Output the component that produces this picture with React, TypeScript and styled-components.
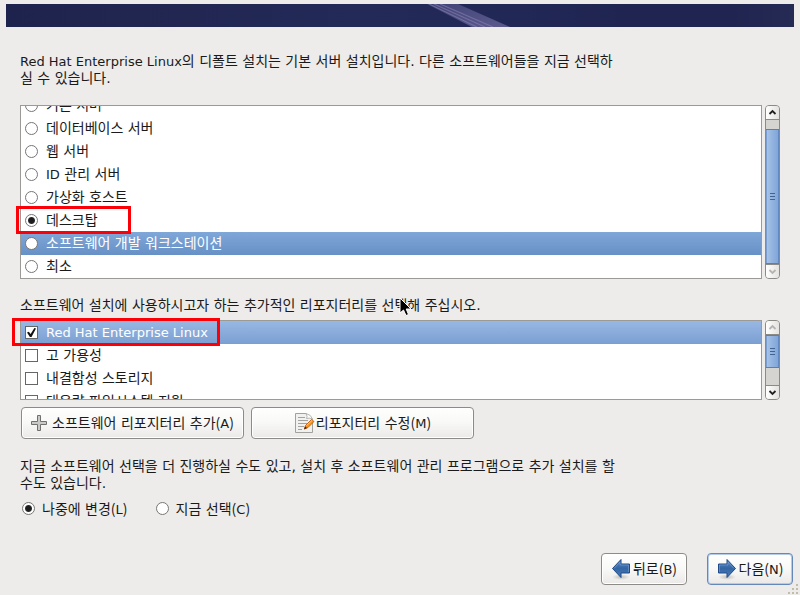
import React from "react";
import styled, { createGlobalStyle } from "styled-components";

const GlobalStyle = createGlobalStyle`
  * { box-sizing: border-box; }
  body {
    margin: 0;
    background: #edecea;
    color: #1a1a1a;
    font-family: "DejaVu Sans", "Noto Sans CJK KR", sans-serif;
    font-size: 14px;
    line-height: 17px;
  }
`;

const Page = styled.div`
  position: relative;
  display: flex;
  flex-direction: column;
  min-height: 100vh;
`;

const Banner = styled.header`
  height: 23px;
  margin: 4px 6px 0;
  overflow: hidden;
  background: linear-gradient(90deg, #1d234c 0%, #20264f 15%, #242a58 45%, #222856 65%, #1f2450 80%, #1f2450 92%, #262b55 100%);
  svg { display: block; width: 100%; height: 23px; }
`;

const Main = styled.main`
  display: flex;
  flex-direction: column;
  padding: 26px 20px 0;
`;

const Latin = styled.span`
  font-family: "DejaVu Sans", sans-serif;
  font-size: 13px;
`;

const Paragraph = styled.p`
  margin: 0;
`;

const Prompt = styled(Paragraph)`
  position: relative;
  margin: 18px 0 6px;
`;

const Pointer = styled.svg`
  position: absolute;
  left: 379px;
  top: 0;
  width: 14px;
  height: 20px;
`;

const ListArea = styled.div<{ $height: number; $top?: number }>`
  position: relative;
  display: flex;
  gap: 3px;
  height: ${(p) => p.$height}px;
  margin-top: ${(p) => p.$top ?? 0}px;
`;

const List = styled.ul<{ $atEnd?: boolean }>`
  flex: 1;
  display: flex;
  flex-direction: column;
  justify-content: ${(p) => (p.$atEnd ? "flex-end" : "flex-start")};
  margin: 0;
  padding: 0;
  overflow: hidden;
  list-style: none;
  background: #fff;
  border: 1px solid #9c9a96;
`;

const Row = styled.li<{ $tone?: "strong" | "soft" }>`
  flex: none;
  height: 23px;
  color: ${(p) => (p.$tone ? "#fff" : "#1a1a1a")};
  background: ${(p) =>
    p.$tone === "strong"
      ? "linear-gradient(#7fa7d8, #6790c6)"
      : p.$tone === "soft"
        ? "linear-gradient(#98b8e3, #7b9fd2)"
        : "none"};
`;

const Option = styled.label`
  display: flex;
  align-items: center;
  gap: 7px;
  height: 23px;
  white-space: nowrap;
`;

const RowOption = styled(Option)`
  gap: 8px;
  padding-left: 4px;
`;

const Radio = styled.input.attrs({ type: "radio" })`
  appearance: none;
  flex: none;
  width: 13px;
  height: 13px;
  margin: 0;
  border: 1px solid #767676;
  border-radius: 50%;
  background: #fff;
  &:checked {
    background: radial-gradient(circle, #1c1c1c 0 2px, #2c2c2c 3px, #fff 4px);
  }
`;

const Check = styled.input.attrs({ type: "checkbox" })`
  appearance: none;
  flex: none;
  display: grid;
  place-items: center;
  width: 13px;
  height: 13px;
  margin: 0;
  border: 1px solid #666;
  background: #fff;
  &:checked::before {
    content: "";
    width: 9px;
    height: 9px;
    background: #111;
    clip-path: polygon(0 50%, 20% 42%, 40% 68%, 82% 0, 100% 6%, 50% 100%, 32% 100%);
  }
`;

const Bar = styled.div`
  display: flex;
  flex-direction: column;
  width: 15px;
  overflow: hidden;
  border: 1px solid #8b8a86;
  border-radius: 4px;
  background: #d5d4d1;
`;

const Step = styled.button<{ $end?: boolean }>`
  flex: none;
  display: grid;
  place-items: center;
  height: 14px;
  margin: 0;
  padding: 0;
  border: 0 solid #8b8a86;
  border-bottom-width: ${(p) => (p.$end ? 0 : 1)}px;
  border-top-width: ${(p) => (p.$end ? 1 : 0)}px;
  background: linear-gradient(90deg, #fff, #e3e2df);
  svg { display: block; }
`;

const Track = styled.div<{ $end?: boolean }>`
  flex: 1;
  display: flex;
  flex-direction: column;
  justify-content: ${(p) => (p.$end ? "flex-end" : "flex-start")};
`;

const Thumb = styled.div<{ $size: number }>`
  display: flex;
  flex-direction: column;
  align-items: center;
  justify-content: center;
  gap: 2px;
  height: ${(p) => p.$size}px;
  border: 1px solid #5b7fb2;
  border-width: 1px 0;
  box-shadow: inset 1px 0 #7b9ed0, inset -1px 0 #6289c0;
  background: linear-gradient(90deg, #a9c6ea, #92b3df 50%, #7da3d7);
`;

const Grip = styled.i`
  width: 5px;
  height: 1px;
  background: #41638f;
`;

const Highlight = styled.div<{ $left: number; $top: number; $width: number; $height: number }>`
  position: absolute;
  left: ${(p) => p.$left}px;
  top: ${(p) => p.$top}px;
  width: ${(p) => p.$width}px;
  height: ${(p) => p.$height}px;
  border: 3px solid #fb0007;
  pointer-events: none;
`;

const Buttons = styled.div`
  display: flex;
  gap: 7px;
  margin: 7px 1px 19px;
`;

const Button = styled.button<{ $wide?: boolean; $focus?: boolean }>`
  display: flex;
  align-items: center;
  justify-content: center;
  gap: ${(p) => (p.$wide ? 5 : 2)}px;
  width: ${(p) => (p.$wide ? 223 : 86)}px;
  height: 32px;
  padding: 0;
  border: 1px solid ${(p) => (p.$focus ? "#6588b8" : "#8c8b88")};
  border-radius: 4px;
  box-shadow: ${(p) => (p.$focus ? "inset 0 0 0 1px #b5cbe8" : "inset 0 0 0 1px #fff")};
  background: linear-gradient(#ffffff, #f8f8f7 50%, #eae9e7);
  color: #1a1a1a;
  font: inherit;
  white-space: nowrap;
  svg { flex: none; }
`;

const EditButton = styled(Button)`
  gap: 1px;
`;

const Paren = styled.span`
  font-family: "Noto Sans CJK KR", sans-serif;
`;

const Choices = styled.div`
  display: flex;
  gap: 28px;
  margin: 5px 2px 0;
`;

const Footer = styled.footer`
  display: flex;
  justify-content: flex-end;
  gap: 20px;
  margin-top: auto;
  padding: 0 7px 10px;
`;

const ResizeGrip = styled.svg`
  position: absolute;
  right: 1px;
  bottom: 0;
`;

function Key({ letter }: { letter: string }) {
  return (
    <>
      <Paren>(</Paren>
      <Latin>{letter}</Latin>
      <Paren>)</Paren>
    </>
  );
}

function Chevron({ up, dim }: { up?: boolean; dim?: boolean }) {
  return (
    <svg width="9" height="7" viewBox="0 0 9 7">
      <path d={up ? "M1.5 5L4.5 2L7.5 5" : "M1.5 2L4.5 5L7.5 2"} fill="none" stroke={dim ? "#b5b4b1" : "#222"} strokeWidth="1.8" />
    </svg>
  );
}

function ScrollBar({ size, end }: { size: number; end?: boolean }) {
  return (
    <Bar>
      <Step type="button" aria-label="위로"><Chevron up dim={!end} /></Step>
      <Track $end={end}>
        <Thumb $size={size}><Grip /><Grip /><Grip /></Thumb>
      </Track>
      <Step type="button" aria-label="아래로" $end><Chevron dim={end} /></Step>
    </Bar>
  );
}

function Arrow({ right }: { right?: boolean }) {
  const id = right ? "arrow-next" : "arrow-back";
  return (
    <svg width="20" height="22" viewBox="0 0 20 22">
      <defs>
        <linearGradient id={id} x1="0" y1="0" x2="0" y2="1">
          <stop offset="0" stopColor="#5b8bc4" />
          <stop offset="0.5" stopColor="#3465a4" />
          <stop offset="1" stopColor="#4a7dba" />
        </linearGradient>
        <radialGradient id={id + "-shade"}>
          <stop offset="0" stopColor="#999" stopOpacity="0.55" />
          <stop offset="1" stopColor="#999" stopOpacity="0" />
        </radialGradient>
      </defs>
      <ellipse cx="10" cy="19" rx="9" ry="3" fill={`url(#${id}-shade)`} />
      <g transform={right ? "translate(20 0) scale(-1 1)" : undefined}>
        <path d="M1.5 10.500L10 1.500V6H18.500V15H10V19.500Z" fill={`url(#${id})`} stroke="#204a87" strokeLinejoin="round" />
        <path d="M3 10.500L9 4V7H17.500V14" fill="none" stroke="#83a9d8" strokeOpacity="0.5" />
      </g>
    </svg>
  );
}

const servers: { name: React.ReactNode; id: string }[] = [
  { id: "basic", name: "기본 서버" },
  { id: "database", name: "데이터베이스 서버" },
  { id: "web", name: "웹 서버" },
  { id: "identity", name: <span><Latin>ID</Latin> 관리 서버</span> },
  { id: "virtual", name: "가상화 호스트" },
  { id: "desktop", name: "데스크탑" },
  { id: "workstation", name: "소프트웨어 개발 워크스테이션" },
  { id: "minimal", name: "최소" },
];

const repositories: { name: React.ReactNode; id: string }[] = [
  { id: "rhel", name: <Latin>Red Hat Enterprise Linux</Latin> },
  { id: "ha", name: "고 가용성" },
  { id: "resilient", name: "내결함성 스토리지" },
  { id: "filesystem", name: "대용량 파일시스템 지원" },
];

export default function App() {
  return (
    <Page>
      <GlobalStyle />
      <Banner>
        <svg viewBox="0 0 788 23" preserveAspectRatio="none">
          <defs>
            <linearGradient id="beam" x1="0" y1="0" x2="1" y2="1">
              <stop offset="0" stopColor="#4a4c83" />
              <stop offset="1" stopColor="#706ba0" />
            </linearGradient>
          </defs>
          <path d="M421 0H452L504 23H466Z" fill="url(#beam)" opacity="0.75" />
          <path d="M423 0L471 23M428 0L479 23M434 0L487 23" stroke="#8780b0" strokeWidth="1.2" opacity="0.6" />
        </svg>
      </Banner>
      <Main>
        <Paragraph>
          <Latin>Red Hat Enterprise Linux</Latin>의 디폴트 설치는 기본 서버 설치입니다. 다른 소프트웨어들을 지금 선택하
          <br />실 수 있습니다.
        </Paragraph>

        <ListArea $height={174} $top={18}>
          <List $atEnd>
            {servers.map((s) => (
              <Row key={s.id} $tone={s.id === "workstation" ? "strong" : undefined}>
                <RowOption>
                  <Radio name="server" defaultChecked={s.id === "desktop"} />
                  {s.name}
                </RowOption>
              </Row>
            ))}
          </List>
          <ScrollBar size={135} end />
          <Highlight $left={-4} $top={101} $width={115} $height={28} />
        </ListArea>

        <Prompt>
          소프트웨어 설치에 사용하시고자 하는 추가적인 리포지터리를 선택해 주십시오.
          <Pointer viewBox="0 0 14 20">
            <path d="M1 1V16L4.500 13L7 18.500L9.500 17.500L7.200 12H12Z" fill="#000" stroke="#fff" />
          </Pointer>
        </Prompt>

        <ListArea $height={80}>
          <List>
            {repositories.map((r) => (
              <Row key={r.id} $tone={r.id === "rhel" ? "soft" : undefined}>
                <RowOption>
                  <Check defaultChecked={r.id === "rhel"} />
                  {r.name}
                </RowOption>
              </Row>
            ))}
          </List>
          <ScrollBar size={33} />
          <Highlight $left={-8} $top={-2} $width={208} $height={28} />
        </ListArea>

        <Buttons>
          <Button type="button" $wide>
            <svg width="16" height="16" viewBox="0 0 16 16">
              <path d="M6.500 0.500H9.500V6.500H15.500V9.500H9.500V15.500H6.500V9.500H0.500V6.500H6.500Z" fill="#c9c9c7" stroke="#70706d" />
            </svg>
            <span>소프트웨어 리포지터리 추가<Key letter="A" /></span>
          </Button>
          <EditButton type="button" $wide>
            <svg width="21" height="22" viewBox="0 0 21 22">
              <path d="M1.500 1.500H12L18.500 7V20.500H1.500Z" fill="#f1f1ef" stroke="#a1a19e" />
              <path d="M12 1.500Q14 5 12.500 6.500Q15 5.500 18.500 7Q17 2.500 12 1.500" fill="#fff" stroke="#b5b5b2" />
              <path d="M4 5.500H11M4 8.500H14M4 11.500H13M4 14.500H10M4 17.500H8" stroke="#a3a3a0" />
              <path d="M10.500 17L11.500 13.500L17.500 7.500L20 9.500L14 15.500Z" fill="#f8931d" stroke="#b65208" strokeWidth="0.8" />
              <path d="M12.500 13.500L18.500 8" stroke="#fcd05b" />
              <path d="M10 17.500L11 14.500L13 16Z" fill="#42210b" />
            </svg>
            <span>리포지터리 수정<Key letter="M" /></span>
          </EditButton>
        </Buttons>

        <Paragraph>
          지금 소프트웨어 선택을 더 진행하실 수도 있고, 설치 후 소프트웨어 관리 프로그램으로 추가 설치를 할
          <br />수도 있습니다.
        </Paragraph>
        <Choices>
          <Option><Radio name="when" defaultChecked /><span>나중에 변경<Key letter="L" /></span></Option>
          <Option><Radio name="when" /><span>지금 선택<Key letter="C" /></span></Option>
        </Choices>
      </Main>
      <Footer>
        <Button type="button"><Arrow /><span>뒤로<Key letter="B" /></span></Button>
        <Button type="button" $focus><Arrow right /><span>다음<Key letter="N" /></span></Button>
      </Footer>
      <ResizeGrip width="12" height="12" viewBox="0 0 12 12">
        <path d="M9 1h2v2h-2zM5 5h2v2h-2zM9 5h2v2h-2zM1 9h2v2h-2zM5 9h2v2h-2zM9 9h2v2h-2z" fill="#c0bda9" />
      </ResizeGrip>
    </Page>
  );
}
